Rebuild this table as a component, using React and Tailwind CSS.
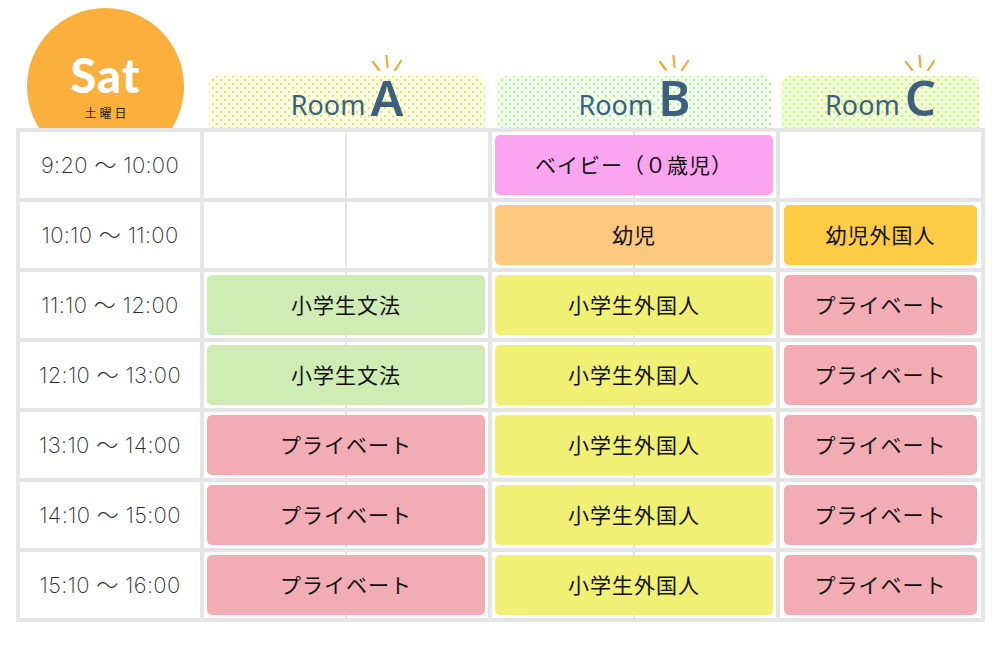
import React from "react";

const JP = "font-['Noto_Sans_CJK_JP','Noto_Sans',sans-serif]";

const rows = [
  { time: "9:20 〜 10:00", a: null, b: ["ベイビー（０歳児）", "bg-[#fba5f1]"], c: null },
  { time: "10:10 〜 11:00", a: null, b: ["幼児", "bg-[#fcc97e]"], c: ["幼児外国人", "bg-[#fecb45]"] },
  { time: "11:10 〜 12:00", a: ["小学生文法", "bg-[#cfecb4]"], b: ["小学生外国人", "bg-[#f0f074]"], c: ["プライベート", "bg-[#f2acb3]"] },
  { time: "12:10 〜 13:00", a: ["小学生文法", "bg-[#cfecb4]"], b: ["小学生外国人", "bg-[#f0f074]"], c: ["プライベート", "bg-[#f2acb3]"] },
  { time: "13:10 〜 14:00", a: ["プライベート", "bg-[#f2acb3]"], b: ["小学生外国人", "bg-[#f0f074]"], c: ["プライベート", "bg-[#f2acb3]"] },
  { time: "14:10 〜 15:00", a: ["プライベート", "bg-[#f2acb3]"], b: ["小学生外国人", "bg-[#f0f074]"], c: ["プライベート", "bg-[#f2acb3]"] },
  { time: "15:10 〜 16:00", a: ["プライベート", "bg-[#f2acb3]"], b: ["小学生外国人", "bg-[#f0f074]"], c: ["プライベート", "bg-[#f2acb3]"] },
];

function Block({ item }) {
  if (!item) return null;
  return (
    <div className={`h-full w-full rounded-[5px] flex items-center justify-center text-[21px] font-normal tracking-[1px] text-[#111] ${JP} ${item[1]}`}>
      {item[0]}
    </div>
  );
}

function Rays() {
  return (
    <svg width="34" height="18" viewBox="0 0 34 18" className="absolute left-1/2 -translate-x-1/2 -top-[24px]">
      <g stroke="#f9a635" strokeWidth="2.2" strokeLinecap="round" fill="none">
        <line x1="3" y1="7" x2="9" y2="15" />
        <line x1="16.5" y1="1" x2="17.5" y2="12" />
        <line x1="31" y1="6" x2="25" y2="15" />
      </g>
    </svg>
  );
}

function Tab({ letter, bg, cls }) {
  return (
    <div
      className={`h-[52px] rounded-t-[8px] flex items-end justify-center pb-[13px] ${cls} ${bg} bg-[radial-gradient(circle,#d5ea58_0.9px,transparent_1.4px),radial-gradient(circle,#d5ea58_0.9px,transparent_1.4px)] bg-[length:8px_8px,8px_8px] bg-[position:0_0,4px_4px]`}
    >
      <span className="text-[27px] leading-[20px] text-[#3e5f7d] font-['Noto_Sans','Liberation_Sans',sans-serif] mr-[5px]">Room</span>
      <span className="relative text-[49px] leading-[36px] font-semibold text-[#3e5f7d] font-['Noto_Sans','Liberation_Sans',sans-serif]">
        <Rays />
        {letter}
      </span>
    </div>
  );
}

export default function App() {
  return (
    <div className="relative w-[997px] h-[650px] bg-white overflow-hidden">
      <div className="absolute left-[27px] top-[8px] w-[157px] h-[157px] rounded-full bg-[#fbb03e] flex flex-col items-center pt-[44px]">
        <div className="text-white text-[47px] leading-[46px] font-black tracking-[1px] font-['Lato','Noto_Sans',sans-serif]">Sat</div>
        <div className={`text-[12px] leading-[14px] tracking-[3px] text-[#222] mt-[8px] ml-[3px] ${JP}`}>土曜日</div>
      </div>

      <div className="relative pt-[76px] pl-[20px]">
        <div className="grid grid-cols-[180px_284px_284px_201px] gap-x-[4px]">
          <div />
          <Tab letter="A" bg="bg-[#fdfee5]" cls="ml-[5px] mr-[3px]" />
          <Tab letter="B" bg="bg-[#ebfdf7]" cls="ml-[6px] mr-[5px]" />
          <Tab letter="C" bg="bg-[#edfbdb]" cls="ml-[2px] mr-[2px]" />
        </div>
      </div>

      <div className="relative z-10 ml-[16px] w-[969px] bg-[#e5e5e5] p-[4px] grid grid-cols-[180px_284px_284px_201px] auto-rows-[66px] gap-[4px]">
        {rows.map((r, i) => (
          <React.Fragment key={i}>
            <div className="bg-white flex items-center justify-center text-[22px] font-extralight tracking-[0.3px] text-[#2a2a2a] font-['Inter','Noto_Sans_CJK_JP',sans-serif]">
              {r.time}
            </div>
            <div className="bg-white bg-[linear-gradient(to_right,transparent_141px,#e5e5e5_141px,#e5e5e5_143px,transparent_143px)] p-[3px]">
              <Block item={r.a} />
            </div>
            <div className="bg-white bg-[linear-gradient(to_right,transparent_141px,#e5e5e5_141px,#e5e5e5_143px,transparent_143px)] p-[3px]">
              <Block item={r.b} />
            </div>
            <div className="bg-white p-[3px] pl-[4px] pr-[4px]">
              <Block item={r.c} />
            </div>
          </React.Fragment>
        ))}
      </div>
    </div>
  );
}
